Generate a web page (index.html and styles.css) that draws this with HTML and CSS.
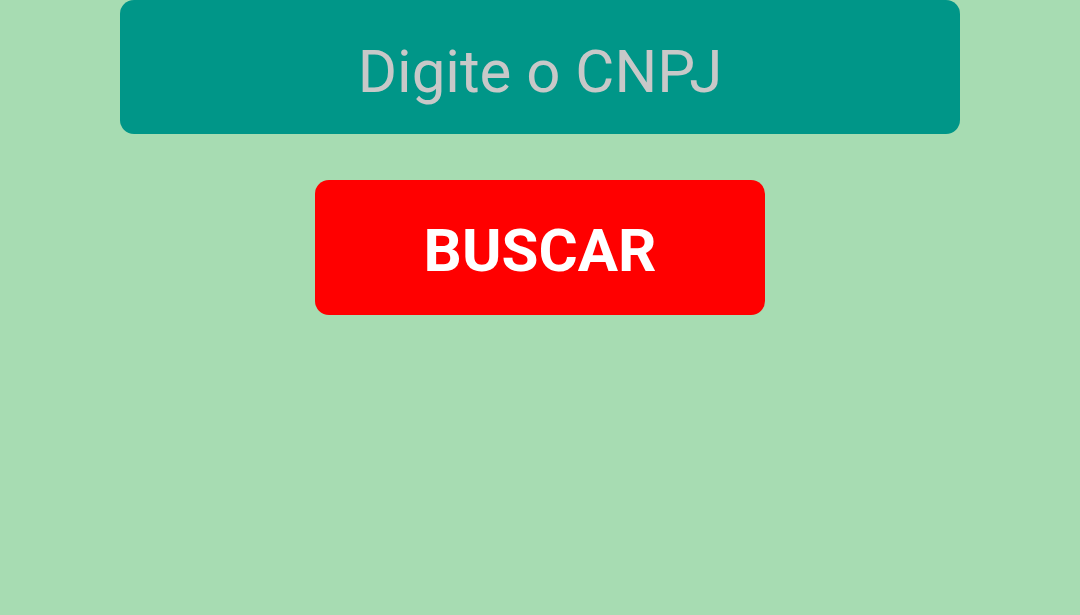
FILE: index.html
```html
<!DOCTYPE html>
<html lang="pt">
<head>
<meta charset="utf-8">
<link rel="stylesheet" href="styles.css">
</head>
<body>
<main class="page">
  <div class="input-box"><span class="placeholder">Digite o CNPJ</span></div>
  <button class="search-btn">BUSCAR</button>
</main>
</body>
</html>
```

FILE: styles.css
```css
html, body {
  margin: 0;
  padding: 0;
  height: 100%;
  background: #a7dcb2;
  font-family: Roboto, "Noto Sans", sans-serif;
}
.page {
  display: flex;
  flex-direction: column;
  align-items: center;
  gap: 46px;
}
.input-box {
  width: 840px;
  height: 134px;
  background: #009688;
  border-radius: 14px;
  display: flex;
  align-items: center;
  justify-content: center;
}
.placeholder {
  color: #c8c8c8;
  font-size: 60px;
  font-weight: 400;
  padding-top: 8px;
}
.search-btn {
  width: 450px;
  height: 135px;
  background: #ff0000;
  border: none;
  border-radius: 14px;
  color: #ffffff;
  font-family: Roboto, "Noto Sans", sans-serif;
  font-size: 60px;
  font-weight: 700;
  padding: 0;
  padding-top: 5px;
}
```
